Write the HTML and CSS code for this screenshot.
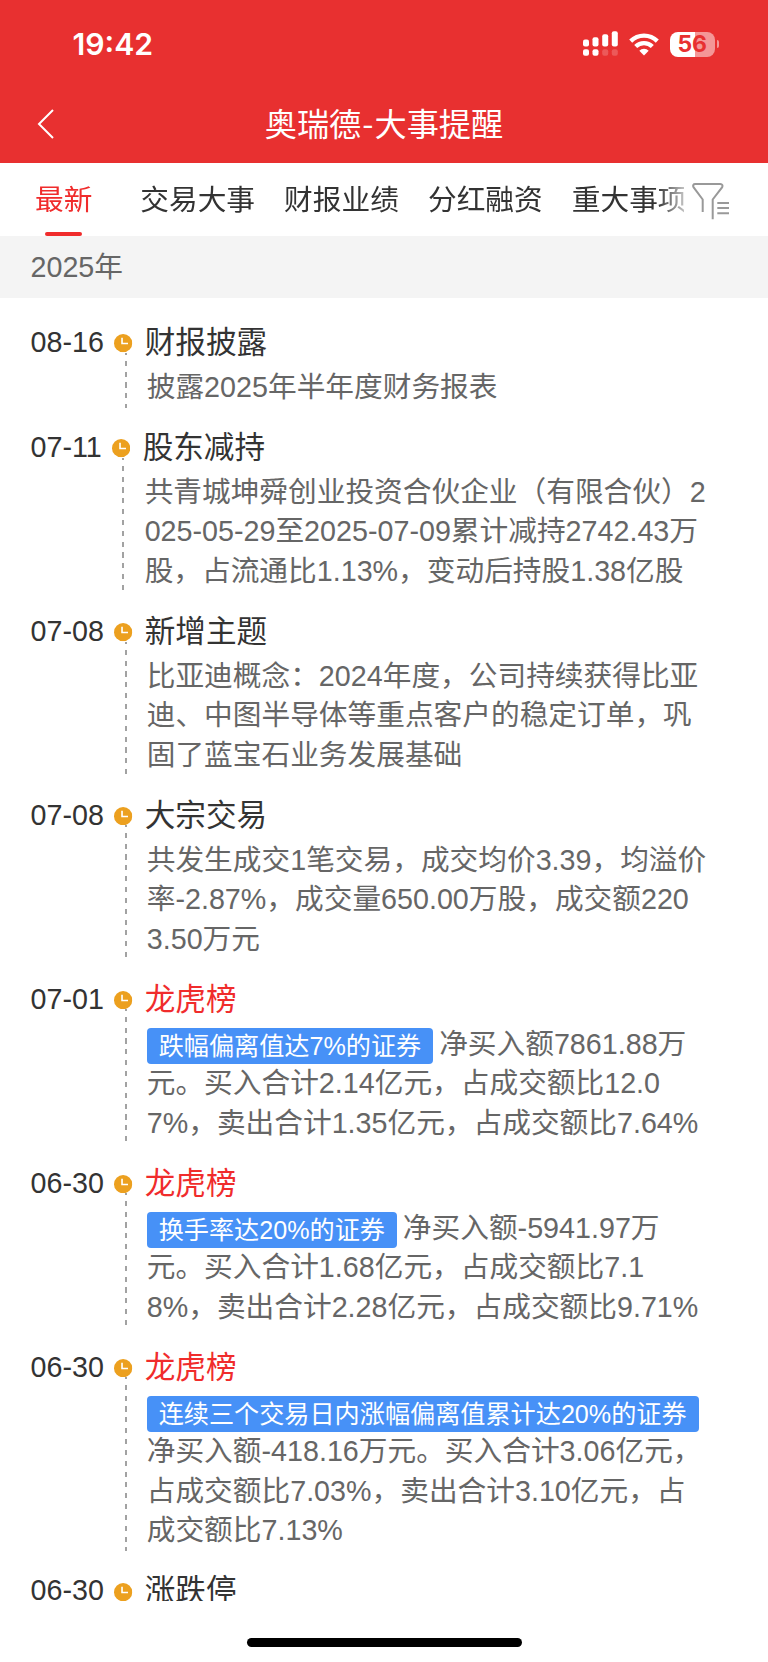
FILE: index.html
```html
<!DOCTYPE html>
<html lang="zh-CN">
<head>
<meta charset="utf-8">
<title>奥瑞德-大事提醒</title>
<link rel="stylesheet" href="styles.css">
</head>
<body>
<svg width="0" height="0" class="defs">
  <symbol id="clock" viewBox="0 0 18 18">
    <circle cx="9" cy="9" r="9" fill="#eca01f"/>
    <path d="M7.9 3.7V9.4H13.8" fill="none" stroke="#fff" stroke-width="1.6"/>
  </symbol>
</svg>
<div class="screen">
  <header class="header">
    <div class="status">
      <span class="time">19:42</span>
      <div class="indicators">
        <svg class="signal" width="36" height="26" viewBox="0 0 36 26" fill="#fff">
          <rect x="0" y="8.5" width="6" height="7" rx="2"/>
          <rect x="9.5" y="6.2" width="6" height="9.3" rx="2"/>
          <rect x="19.2" y="3.3" width="6" height="12.2" rx="2"/>
          <rect x="28.8" y="0.3" width="6" height="15.2" rx="2"/>
          <rect x="0" y="18.3" width="6" height="6.5" rx="2"/>
          <rect x="9.5" y="18.3" width="6" height="6.5" rx="2"/>
          <rect x="19.2" y="18.3" width="6" height="6.5" rx="2" opacity=".2"/>
          <rect x="28.8" y="18.3" width="6" height="6.5" rx="2" opacity=".2"/>
        </svg>
        <svg class="wifi" width="30" height="23" viewBox="0 0 30 23">
          <g fill="none" stroke="#fff" stroke-width="4.3">
            <path d="M1.7 8.1A19 19 0 0 1 28.3 8.1"/>
            <path d="M6.7 13.5A11.8 11.8 0 0 1 23.3 13.5"/>
          </g>
          <path d="M15 22.4L10.3 17.8A6.7 6.7 0 0 1 19.7 17.8Z" fill="#fff"/>
        </svg>
        <div class="battery"><span class="level">56</span><i class="nub"></i></div>
      </div>
    </div>
    <div class="navbar">
      <svg class="back" width="18" height="30" viewBox="0 0 18 30"><path d="M16 1L2 15L16 29" fill="none" stroke="#fff" stroke-width="2"/></svg>
      <h1 class="title">奥瑞德<span class="hyphen">-</span>大事提醒</h1>
    </div>
  </header>
  <nav class="tabs">
    <div class="tablist">
      <span class="tab active">最新</span>
      <span class="tab">交易大事</span>
      <span class="tab">财报业绩</span>
      <span class="tab">分红融资</span>
      <span class="tab">重大事项</span>
    </div>
    <svg class="filter" width="38" height="38" viewBox="0 0 38 38" fill="none" stroke="#999" stroke-width="2">
      <path d="M10.7 29V16.5L1.5 4.2Q.3 1.2 3.2 1.1H28.3Q31.3 1.3 30.2 4.2L20.7 16.5V36.3"/>
      <path d="M25.3 20H37M25.3 25H37M25.3 30.2H37"/>
    </svg>
  </nav>
  <div class="year">2025年</div>
  <main class="list">
    <article class="item">
      <time class="date">08-16</time>
      <div class="rail"><svg class="dot"><use href="#clock"/></svg><i class="line"></i></div>
      <div class="body"><h2 class="name">财报披露</h2><p class="text">披露2025年半年度财务报表</p></div>
    </article>
    <article class="item">
      <time class="date">07-11</time>
      <div class="rail"><svg class="dot"><use href="#clock"/></svg><i class="line"></i></div>
      <div class="body"><h2 class="name">股东减持</h2><p class="text">共青城坤舜创业投资合伙企业（有限合伙）2<br>025-05-29至2025-07-09累计减持2742.43万<br>股，占流通比1.13%，变动后持股1.38亿股</p></div>
    </article>
    <article class="item">
      <time class="date">07-08</time>
      <div class="rail"><svg class="dot"><use href="#clock"/></svg><i class="line"></i></div>
      <div class="body"><h2 class="name">新增主题</h2><p class="text">比亚迪概念：2024年度，公司持续获得比亚<br>迪、中图半导体等重点客户的稳定订单，巩<br>固了蓝宝石业务发展基础</p></div>
    </article>
    <article class="item">
      <time class="date">07-08</time>
      <div class="rail"><svg class="dot"><use href="#clock"/></svg><i class="line"></i></div>
      <div class="body"><h2 class="name">大宗交易</h2><p class="text">共发生成交1笔交易，成交均价3.39，均溢价<br>率-2.87%，成交量650.00万股，成交额220<br>3.50万元</p></div>
    </article>
    <article class="item">
      <time class="date">07-01</time>
      <div class="rail"><svg class="dot"><use href="#clock"/></svg><i class="line"></i></div>
      <div class="body"><h2 class="name hot">龙虎榜</h2><p class="text"><span class="tag">跌幅偏离值达7%的证券</span>净买入额7861.88万<br>元。买入合计2.14亿元，占成交额比12.0<br>7%，卖出合计1.35亿元，占成交额比7.64%</p></div>
    </article>
    <article class="item">
      <time class="date">06-30</time>
      <div class="rail"><svg class="dot"><use href="#clock"/></svg><i class="line"></i></div>
      <div class="body"><h2 class="name hot">龙虎榜</h2><p class="text"><span class="tag">换手率达20%的证券</span>净买入额-5941.97万<br>元。买入合计1.68亿元，占成交额比7.1<br>8%，卖出合计2.28亿元，占成交额比9.71%</p></div>
    </article>
    <article class="item">
      <time class="date">06-30</time>
      <div class="rail"><svg class="dot"><use href="#clock"/></svg><i class="line"></i></div>
      <div class="body"><h2 class="name hot">龙虎榜</h2><p class="text"><span class="tag">连续三个交易日内涨幅偏离值累计达20%的证券</span><br>净买入额-418.16万元。买入合计3.06亿元，<br>占成交额比7.03%，卖出合计3.10亿元，占<br>成交额比7.13%</p></div>
    </article>
    <article class="item">
      <time class="date">06-30</time>
      <div class="rail"><svg class="dot"><use href="#clock"/></svg></div>
      <div class="body"><h2 class="name">涨跌停</h2></div>
    </article>
  </main>
  <footer class="home"><i class="bar"></i></footer>
</div>
</body>
</html>
```
FILE: styles.css
```css
* { box-sizing: border-box; margin: 0; padding: 0; }
body {
  background: #fff;
  font-family: "Liberation Sans", "Noto Sans CJK SC", sans-serif;
  font-size: 28.7px;
  color: #333;
}
.defs { position: absolute; }
i { display: block; }
.screen {
  width: 768px;
  height: 1662px;
  display: flex;
  flex-direction: column;
  overflow: hidden;
}

.header { height: 163.4px; flex: none; background: #e83030; color: #fff; }
.status {
  height: 88px;
  padding: 0 49px 0 72.5px;
  display: flex;
  align-items: center;
  justify-content: space-between;
}
.time { font: 600 30.2px/36px Inter, sans-serif; }
.indicators { display: flex; align-items: center; }
.wifi { margin: 0 11px 0 10px; }
.battery { display: flex; align-items: center; gap: 1.5px; }
.level {
  width: 45.5px;
  height: 25px;
  border-radius: 8px;
  background: linear-gradient(90deg, #fff 56%, #f49797 56%);
  color: #e83030;
  font: 700 23px/25px Inter, sans-serif;
  text-align: center;
}
.nub { width: 2.5px; height: 8px; border-radius: 0 3px 3px 0; background: #f49797; }
.navbar {
  height: 72px;
  padding: 0 37px;
  display: grid;
  grid-template-columns: 18px 1fr 18px;
  align-items: center;
}
.title {
  font: 400 32.2px/40px "Noto Sans CJK SC", sans-serif;
  padding-bottom: 4px;
  text-align: center;
}
.hyphen { padding: 0 1px; }

.tabs {
  height: 73.3px;
  flex: none;
  padding-left: 35px;
  display: flex;
  border-bottom: 1px solid #f4f4f4;
}
.tablist {
  width: 649px;
  display: flex;
  gap: 29.1px;
  overflow: hidden;
  white-space: nowrap;
  -webkit-mask-image: linear-gradient(90deg, #000 622px, rgba(0, 0, 0, .3) 649px);
  mask-image: linear-gradient(90deg, #000 622px, rgba(0, 0, 0, .3) 649px);
}
.tab { line-height: 75px; }
.active { color: #f02c2c; margin-right: 18.8px; display: flex; flex-direction: column; align-items: center; height: 73.3px; }
.active::after { content: ""; width: 37px; height: 4px; border-radius: 2px; background: #f02c2c; margin-top: -6px; flex: none; }
.filter { margin: 19.5px 0 0 8px; flex: none; }

.year {
  height: 61.6px;
  flex: none;
  padding-left: 30.5px;
  background: #f4f4f4;
  color: #666;
  line-height: 60px;
}

.list { height: 1302.3px; flex: none; padding: 21.7px 0 0 30.5px; overflow: hidden; }
.item { display: flex; margin-bottom: 17.2px; }
.date { line-height: 44px; }
.rail { width: 18.3px; margin: 14.5px 12.2px 0 10.4px; display: flex; flex-direction: column; }
.dot { width: 18.3px; height: 18.3px; flex: none; }
.line {
  flex: 1;
  width: 2px;
  margin-left: 10.3px;
  background: repeating-linear-gradient(180deg, #a2a2a2 0 2px, transparent 2px 7.7px, #a2a2a2 7.7px 10.85px);
}
.name { font-size: 30.6px; font-weight: 400; line-height: 44px; }
.hot { color: #f02c2c; }
.text { padding: 4px 0 0 2px; color: #666; line-height: 39.6px; white-space: nowrap; }
.tag {
  display: inline-block;
  height: 36px;
  margin-right: 6px;
  padding: 0 11.9px;
  border-radius: 4px;
  background: #4791f7;
  color: #fff;
  font-size: 25.15px;
  line-height: 36px;
  vertical-align: middle;
}

.home { flex: 1; display: flex; justify-content: center; padding-top: 37.2px; }
.bar { width: 275px; height: 9.5px; border-radius: 5px; background: #000; }
```
